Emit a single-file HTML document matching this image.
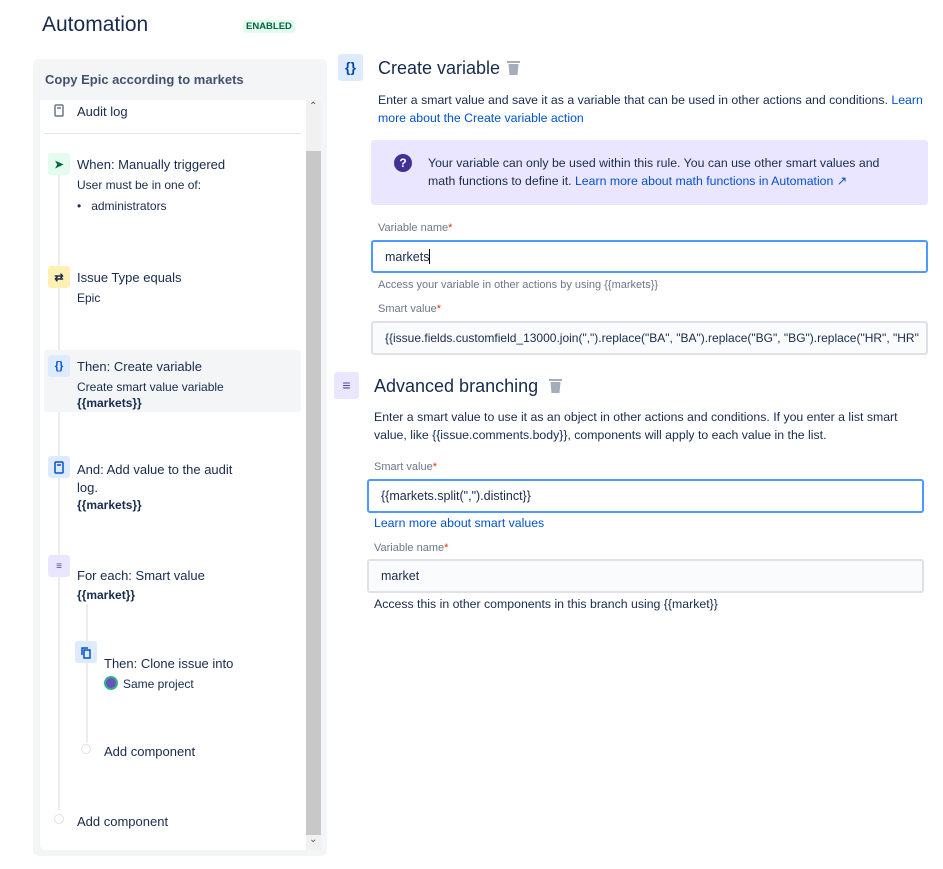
<!DOCTYPE html>
<html><head><meta charset="utf-8"><style>
*{margin:0;padding:0;box-sizing:border-box}
body{width:943px;height:869px;background:#fff;font-family:"Liberation Sans",sans-serif;color:#172b4d;position:relative;overflow:hidden}
.a{position:absolute;white-space:nowrap}
.t{font-size:13px;color:#172b4d}
.s{font-size:12px;color:#172b4d}
.ib{position:absolute;width:22px;height:22px;border-radius:3px;display:flex;align-items:center;justify-content:center;font-size:11px;font-weight:bold}
.lbl{font-size:11px;color:#6b778c}
.lbl b{color:#de350b;font-weight:normal}
.in{position:absolute;border-radius:3px;font-size:12.5px;padding-left:12px;display:flex;align-items:center;white-space:nowrap;overflow:hidden}
.d{font-size:12.3px;line-height:18px;color:#172b4d}
.d.link,.link{color:#0052cc}
</style></head><body>
<div class="a" style="left:42px;top:13px;font-size:21px;color:#172b4d">Automation</div>
<div class="a" style="left:243px;top:20px;font-size:9.5px;font-weight:bold;color:#006644;background:#e3fcef;padding:1px 3px;border-radius:3px">ENABLED</div>

<div class="a" style="left:33px;top:59px;width:294px;height:797px;background:#f4f5f7;border-radius:6px"></div>
<div class="a" style="left:45px;top:72px;font-size:13px;font-weight:bold;color:#42526e">Copy Epic according to markets</div>
<div class="a" style="left:40px;top:100px;width:281px;height:750px;background:#fff;border-radius:0 0 0 6px"></div>
<div class="a" style="left:306px;top:100px;width:15px;height:750px;background:#f1f1f1"></div>
<div class="a" style="left:306px;top:151px;width:15px;height:684px;background:#c8c8c8"></div>
<div class="a" style="left:309px;top:101px;font-size:10px;color:#555">&#8963;</div>
<div class="a" style="left:309px;top:834px;font-size:10px;color:#555">&#8964;</div>

<svg class="a" style="left:54px;top:104px" width="11" height="13"><rect x="1" y="1" width="8" height="11" rx="1" fill="none" stroke="#6b778c" stroke-width="1.5"/><line x1="3" y1="4" x2="7" y2="4" stroke="#6b778c" stroke-width="1.5"/></svg>
<div class="a t" style="left:77px;top:104px">Audit log</div>
<div class="a" style="left:44px;top:133px;width:257px;height:1px;background:#e4e6ea"></div>

<div class="a" style="left:58px;top:170px;width:2px;height:640px;background:#ebecf0"></div>
<div class="a" style="left:86px;top:604px;width:2px;height:138px;background:#ebecf0"></div>

<div class="ib" style="left:48px;top:153px;background:#e3fcef;color:#006644">&#10148;</div>
<div class="a t" style="left:77px;top:157px">When: Manually triggered</div>
<div class="a s" style="left:77px;top:178px">User must be in one of:</div>
<div class="a s" style="left:77px;top:199px">•&nbsp;&nbsp;&nbsp;administrators</div>

<div class="ib" style="left:48px;top:266px;background:#fff0b3;color:#172b4d">&#8644;</div>
<div class="a t" style="left:77px;top:270px">Issue Type equals</div>
<div class="a s" style="left:77px;top:291px">Epic</div>

<div class="a" style="left:44px;top:350px;width:257px;height:62px;background:#f4f5f7;border-radius:3px"></div>
<div class="ib" style="left:48px;top:355px;background:#deebff;color:#0052cc">{}</div>
<div class="a t" style="left:77px;top:359px">Then: Create variable</div>
<div class="a s" style="left:77px;top:380px">Create smart value variable</div>
<div class="a s" style="left:77px;top:396px;font-weight:bold">{{markets}}</div>

<div class="ib" style="left:48px;top:456px;background:#deebff"><svg width="10" height="13"><rect x="1" y="1" width="8" height="11" rx="1" fill="none" stroke="#0052cc" stroke-width="1.5"/><line x1="3" y1="4" x2="7" y2="4" stroke="#0052cc" stroke-width="1.5"/></svg></div>
<div class="a t" style="left:77px;top:462px">And: Add value to the audit</div>
<div class="a t" style="left:77px;top:480px">log.</div>
<div class="a s" style="left:77px;top:498px;font-weight:bold">{{markets}}</div>

<div class="ib" style="left:48px;top:555px;background:#eae6ff;color:#5243aa;font-size:10px">&#8801;</div>
<div class="a t" style="left:77px;top:568px">For each: Smart value</div>
<div class="a s" style="left:77px;top:588px;font-weight:bold">{{market}}</div>

<div class="ib" style="left:75px;top:641px;background:#deebff"><svg width="12" height="13"><rect x="4" y="4" width="6" height="8" fill="none" stroke="#0052cc" stroke-width="1.5"/><path d="M2 9V2h6" fill="none" stroke="#0052cc" stroke-width="1.5"/></svg></div>
<div class="a t" style="left:104px;top:656px">Then: Clone issue into</div>
<div class="a" style="left:104px;top:676px;width:14px;height:14px;border-radius:50%;background:#6554c0;border:2px solid #36b37e"></div>
<div class="a s" style="left:123px;top:677px">Same project</div>

<div class="a" style="left:81px;top:744px;width:10px;height:10px;border-radius:50%;border:1.5px solid #dfe1e6;background:#fff"></div>
<div class="a t" style="left:104px;top:744px">Add component</div>
<div class="a" style="left:54px;top:814px;width:10px;height:10px;border-radius:50%;border:1.5px solid #dfe1e6;background:#fff"></div>
<div class="a t" style="left:77px;top:814px">Add component</div>

<!-- right -->
<div class="a" style="left:338px;top:54px;width:25px;height:27px;background:#deebff;border-radius:3px;color:#0747a6;font-size:14px;font-weight:bold;text-align:center;line-height:27px">{}</div>
<div class="a" style="left:378px;top:58px;font-size:18px;color:#172b4d">Create variable</div>
<svg class="a" style="left:507px;top:60px" width="13" height="15"><rect x="0" y="1" width="13" height="2" fill="#a5adba"/><path d="M1.5 4h10l-1 11h-8z" fill="#a5adba"/></svg>
<div class="a d" style="left:378px;top:91px">Enter a smart value and save it as a variable that can be used in other actions and conditions. <span class="link">Learn</span></div>
<div class="a d link" style="left:378px;top:109px">more about the Create variable action</div>
<div class="a" style="left:371px;top:140px;width:557px;height:65px;background:#eae6ff;border-radius:3px"></div>
<div class="a" style="left:394px;top:154px;width:18px;height:18px;border-radius:50%;background:#403294;color:#fff;font-size:12px;font-weight:bold;text-align:center;line-height:18px">?</div>
<div class="a d" style="left:428px;top:154px">Your variable can only be used within this rule. You can use other smart values and</div>
<div class="a d" style="left:428px;top:172px">math functions to define it. <span class="link">Learn more about math functions in Automation ↗</span></div>
<div class="a lbl" style="left:378px;top:222px">Variable name<b>*</b></div>
<div class="in" style="left:371px;top:240px;width:557px;height:33px;border:2px solid #4c9aff;padding-left:12px">markets<span style="border-left:1px solid #000;height:15px"></span></div>
<div class="a lbl" style="left:378px;top:279px">Access your variable in other actions by using {{markets}}</div>
<div class="a lbl" style="left:378px;top:303px">Smart value<b>*</b></div>
<div class="in" style="left:371px;top:321px;width:557px;height:34px;border:2px solid #dfe1e6;background:#fafbfc;padding-left:12px;font-size:12px">{{issue.fields.customfield_13000.join(",").replace("BA", "BA").replace("BG", "BG").replace("HR", "HR"</div>

<div class="a" style="left:334px;top:372px;width:25px;height:27px;background:#eae6ff;border-radius:3px;color:#5243aa;font-size:14px;font-weight:bold;text-align:center;line-height:27px">&#8801;</div>
<div class="a" style="left:374px;top:376px;font-size:18px;color:#172b4d">Advanced branching</div>
<svg class="a" style="left:549px;top:378px" width="13" height="15"><rect x="0" y="1" width="13" height="2" fill="#a5adba"/><path d="M1.5 4h10l-1 11h-8z" fill="#a5adba"/></svg>
<div class="a d" style="left:374px;top:408px">Enter a smart value to use it as an object in other actions and conditions. If you enter a list smart</div>
<div class="a d" style="left:374px;top:426px">value, like {{issue.comments.body}}, components will apply to each value in the list.</div>
<div class="a lbl" style="left:374px;top:461px">Smart value<b>*</b></div>
<div class="in" style="left:367px;top:479px;width:557px;height:34px;border:2px solid #4c9aff">{{markets.split(",").distinct}}</div>
<div class="a d link" style="left:374px;top:514px">Learn more about smart values</div>
<div class="a lbl" style="left:374px;top:542px">Variable name<b>*</b></div>
<div class="in" style="left:367px;top:559px;width:557px;height:34px;border:2px solid #dfe1e6;background:#fafbfc">market</div>
<div class="a d" style="left:374px;top:595px">Access this in other components in this branch using {{market}}</div>
</body></html>
